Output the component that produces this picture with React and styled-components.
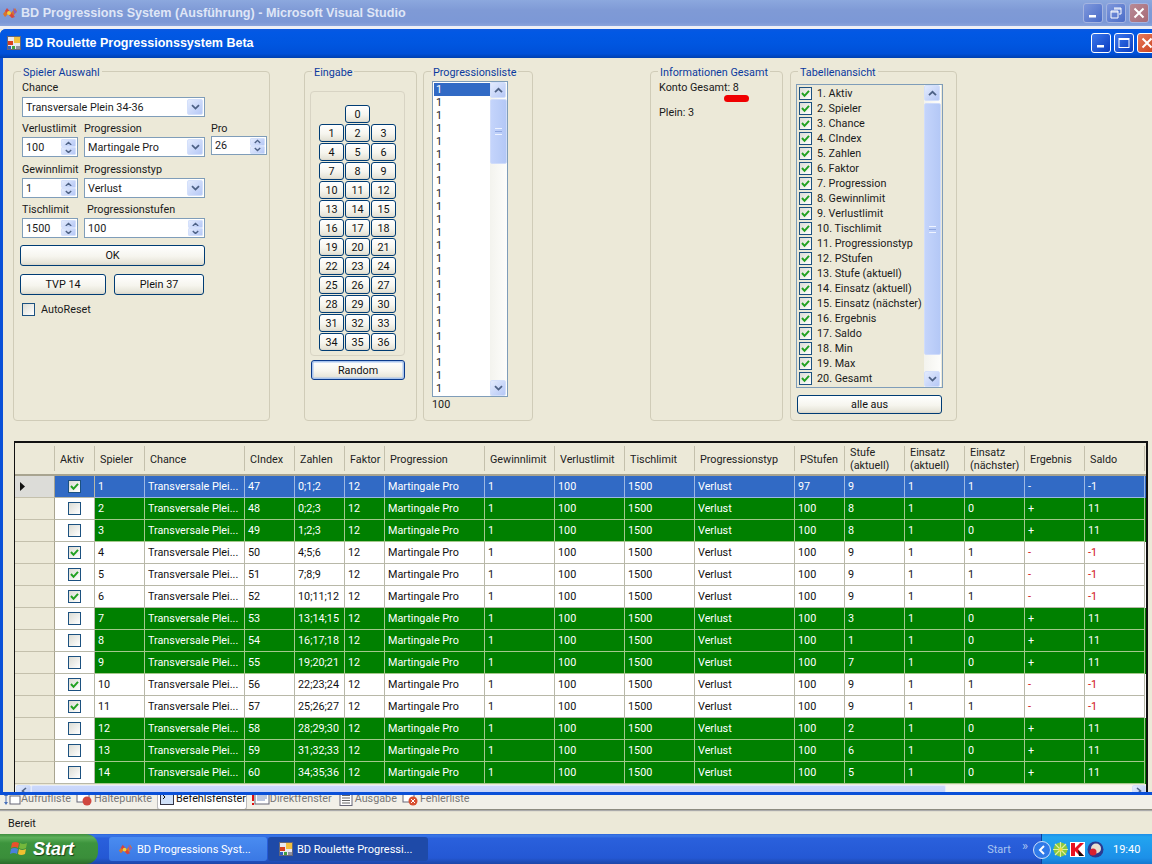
import React from "react";
import styled, { createGlobalStyle } from "styled-components";

const Global = createGlobalStyle`
  html, body { margin: 0; padding: 0; background: #ece9d8; }
  * { box-sizing: border-box; }
`;

const Screen = styled.div`
  width: 1152px; height: 864px; overflow: hidden; display: flex; flex-direction: column;
  font-family: Roboto, "Liberation Sans", Arial, sans-serif; font-size: 10.8px; color: #1a1a1a; background: #ece9d8;
`;
const BoldFont = `"Liberation Sans", Arial, sans-serif`;
const VsTitle = styled.div`
  height: 26px; flex: none; display: flex; align-items: center; padding: 0 3px 0 2px; gap: 3px;
  background: linear-gradient(180deg, #8ca8de 0%, #7f9ad6 40%, #7c98d6 85%, #8aa4dc 100%);
  color: #dfe6f6; font: bold 12.6px ${BoldFont};
`;
const Grow = styled.div`flex: 1;`;
const Strip = styled.div`height: 3px; flex: none; background: #eef0f6;`;
const CapBtn = styled.div`
  width: ${p => p.$w || 20}px; height: 20px; flex: none; border-radius: 3px; border: 1px solid ${p => p.$dim ? "#a4b4e0" : "#fff"};
  background: ${p => p.$red ? (p.$dim ? "linear-gradient(135deg,#b88a96,#a76a76)" : "linear-gradient(135deg,#e87a5c,#c8401c)") : (p.$dim ? "linear-gradient(135deg,#7f98dc,#4a6cc8)" : "linear-gradient(135deg,#3c78ec,#0a3cc0)")};
  display: flex; align-items: center; justify-content: center;
`;
const FormWindow = styled.div`
  height: 766px; flex: none; width: 1162px; display: flex; flex-direction: column; position: relative; z-index: 2;
  background: #0a50d8; padding: 0 3px 3px 3px; border-radius: 6px 6px 0 0;
`;
const FormTitle = styled.div`
  height: 29px; flex: none; display: flex; align-items: center; gap: 4px; padding: 0 5px 1px 7px; margin: 0 -3px;
  background: linear-gradient(180deg, #0a58e0 0%, #0258e4 12%, #0056e0 50%, #0050d8 85%, #0040b0 100%);
  border-radius: 6px 6px 0 0; color: #fff; font: bold 12.5px ${BoldFont};
`;
const FormBtns = styled.div`display: flex; gap: 3px;`;
const FormBody = styled.div`
  flex: 1; background: #ece9d8; display: flex; flex-direction: column; padding: 7px 0 0 10px; overflow: hidden; min-height: 0;
`;
const GroupRow = styled.div`display: flex; height: 376px; flex: none;`;
const Group = styled.fieldset`
  margin: 0 0 0 ${p => p.$ml || 0}px; padding: 0; width: ${p => p.$w}px; height: 356px; flex: none;
  border: 1px solid #d0ccb8; border-radius: 4px; display: block; min-width: 0; align-self: flex-start;
  background: transparent;
`;
const Legend = styled.legend`
  margin-left: 7px; padding: 0 2px; color: #0b3a9e; line-height: 15px; height: 13px;
`;
const SpielerBody = styled.div`
  display: grid; grid-template-columns: 56px 121px 56px; column-gap: 6px; padding: 2px 0 0 8px; width: 260px;
  grid-template-rows: 17px 20px 20px 20px 21px 20px 20px 20px;
`;
const Label = styled.div`
  line-height: 14px; white-space: nowrap; grid-column: ${p => p.$col || "auto"}; padding-left: ${p => p.$pl || 0}px;
  align-self: ${p => p.$end ? "end" : "start"}; padding-bottom: ${p => p.$end ? 1 : 0}px; padding-top: ${p => p.$end ? 0 : 1}px;
`;
const ComboBox = styled.div`
  height: 20px; border: 1px solid #7f9db9; background: #fff; display: flex; align-items: center; padding: 0 1px 0 ${p => p.$pl || 3}px;
  justify-content: space-between; grid-column: ${p => p.$col || "auto"}; white-space: nowrap; overflow: hidden;
`;
const ArrowBtn = styled.div`
  width: ${p => p.$w || 16}px; height: ${p => p.$h || 16}px; flex: none; background: linear-gradient(135deg, #e3ebfd, #b6c8f6);
  border: 1px solid #d4e0fb; border-radius: 2px; display: flex; align-items: center; justify-content: center;
`;
const Spin = styled.div`display: flex; flex-direction: column; flex: none; width: 15px;`;
const SpinBtn = styled.div`
  height: 8px; background: linear-gradient(135deg, #e3ebfd, #b6c8f6); border: 1px solid #d4e0fb; border-radius: 1px; display: flex; align-items: center; justify-content: center;
`;
const ProSpin = styled(ComboBox)`margin-top: -1px; height: 19px; align-self: start;`;
const XpButton = styled.button`
  font: inherit; color: #111; padding: 0; background: linear-gradient(180deg, #fff 0%, #f6f5ee 55%, #e6e4d8 90%, #d8d4c8 100%);
  border: 1px solid #003c74; border-radius: 3px; width: ${p => p.$w || 25}px; height: ${p => p.$h || 18}px; flex: none;
  ${p => p.$def ? "box-shadow: inset 0 0 0 1.5px #a8c4ee; border-color:#0a3a8c;" : ""}
`;
const BtnStack = styled.div`display: flex; flex-direction: column; padding: 7px 0 0 6px; width: 190px;`;
const BtnRow = styled.div`display: flex; gap: 8px; margin-top: 8px;`;
const CheckRow = styled.div`display: flex; align-items: center; gap: 6px; margin: 8px 0 0 2px;`;
const Check = styled.div`
  width: 13px; height: 13px; flex: none; border: 1px solid #1c5180; background: linear-gradient(135deg, #dcdcd4, #fff);
  display: flex; align-items: center; justify-content: center;
`;
const EingabeBody = styled.div`display: flex; flex-direction: column; padding: 13px 0 0 5px;`;
const Inner = styled.div`
  width: 95px; height: 265px; border: 1px solid #d8d4c4; border-radius: 4px; padding-top: 13px;
  display: grid; grid-template-columns: repeat(3, 25px); grid-auto-rows: 19px; column-gap: 1px; justify-content: center;
`;
const RandomWrap = styled.div`padding: 4px 0 0 1px;`;
const ListBody = styled.div`padding: 0 0 0 8px;`;
const ListBox = styled.div`
  width: 76px; height: 316px; border: 1px solid #7f9db9; background: #fff; display: flex; overflow: hidden; margin-top: 3px;
`;
const Items = styled.div`flex: 1; overflow: hidden; padding: 1px 0 0 1px;`;
const Item = styled.div`
  height: 13px; line-height: 13px; padding-left: 2px; ${p => p.$sel ? "background:#316ac5;color:#fff;" : ""}
`;
const VScroll = styled.div`
  width: 17px; flex: none; background: linear-gradient(90deg, #f3f3ee, #fdfdfb); display: flex; flex-direction: column;
`;
const Thumb = styled.div`
  height: ${p => p.$h}px; margin-top: ${p => p.$mt || 1}px; background: linear-gradient(90deg, #c4d4fb, #b4c8f6); border: 1px solid #d0dcfa; border-radius: 2px; flex: none;
  display: flex; align-items: center; justify-content: center; position: relative;
`;
const Grip = styled.div`
  position: absolute; top: ${p => p.$top}; width: 7px; height: 7px; border-top: 1px solid #eef3ff; border-bottom: 1px solid #eef3ff;
  background: linear-gradient(#8ea6e0, #8ea6e0) 0 2px / 7px 1px no-repeat;
`;
const Spacer = styled.div`flex: 1;`;
const Hundred = styled.div`margin-top: 1px; line-height: 13px;`;
const InfoBody = styled.div`padding: 3px 0 0 8px; line-height: 14px;`;
const Konto = styled.div`position: relative; width: fit-content; margin-bottom: 11px;`;
const RedMark = styled.div`
  position: absolute; left: 65px; top: 14px; width: 25px; height: 7px; background: #f00000; border-radius: 4px;
`;
const TabBody = styled.div`padding: 0 0 0 5px;`;
const CheckList = styled.div`
  width: 147px; height: 304px; border: 1px solid #7f9db9; background: #ece9d8; display: flex; overflow: hidden; margin-top: 6px; padding-right: 1px;
`;
const CheckItems = styled.div`flex: 1; padding: 1px 0 0 2px; overflow: hidden;`;
const CheckItem = styled.div`display: flex; align-items: center; gap: 5px; height: 15px; white-space: nowrap;`;
const AlleWrap = styled.div`padding: 7px 0 0 1px;`;

const DataGrid = styled.div`
  width: 1134px; flex: 1; min-height: 0; margin-left: 1px; border-top: 2px solid #111; border-left: 1px solid #111; border-right: 2px solid #111;
  background: #ece9d8; display: flex; flex-direction: column; overflow: hidden;
`;
const HeadRow = styled.div`
  display: flex; height: 33px; flex: none; border-bottom: 2px solid #a8a490; background: #ece9d8;
`;
const HeadCell = styled.div`
  width: ${p => p.$w}px; flex: none; border-right: 1px solid #c4c0ac; padding: 1px 0 0 5px; margin: 3px 0; display: flex; align-items: center;
  line-height: 13px; white-space: pre-line; color: #222;
`;
const Row = styled.div`
  display: flex; height: 22px; flex: none; background: ${p => p.$bg}; color: ${p => p.$fg};
`;
const RowHead = styled.div`
  width: 40px; flex: none; background: ${p => p.$sel ? "#dcdcd8" : "#ece9d8"}; border-right: 1px solid #a8a490; border-bottom: 1px solid #c4c0ac;
  display: flex; align-items: center; padding-left: 5px;
`;
const Cell = styled.div`
  width: ${p => p.$w}px; flex: none; border-right: 1px solid ${p => p.$line}; border-bottom: 1px solid ${p => p.$line};
  padding: 0 0 0 3px; line-height: 22px; white-space: nowrap; overflow: hidden;
  color: ${p => p.$c || "inherit"};
`;
const CheckCell = styled.div`
  width: 40px; flex: none; background: ${p => p.$sel ? "#316ac5" : "#fff"}; color: #111; border-right: 1px solid #b8b8a8; border-bottom: 1px solid #b8b8a8;
  display: flex; align-items: center; justify-content: center; padding-right: 1px;
`;
const HScroll = styled.div`
  height: 12px; flex: none; margin-top: 1px; background: #f6f5f0; display: flex; padding-left: 1px;
`;
const HButton = styled(ArrowBtn)`height: 12px;`;
const HThumb = styled.div`
  width: 915px; background: linear-gradient(180deg, #cbd8fb, #c2d1fa); border: 1px solid #e4ebfd; border-radius: 2px;
`;

const TabStrip = styled.div`
  height: 15px; flex: none; background: #f2f0e8; border-bottom: 1px solid #8e8c80; display: flex; gap: 5px; overflow: hidden; padding-left: 3px;
  box-shadow: 0 1px 1px #aaa; position: relative; z-index: 1;
`;
const Tab = styled.div`
  display: flex; align-items: flex-start; margin-top: -3px; color: ${p => p.$on ? "#111" : "#777"};
  ${p => p.$on ? "background:#fff; border-radius: 0 0 3px 3px; border: 1px solid #bbb; border-top:0;" : ""}
  line-height: 14px; height: 18px; white-space: nowrap;
`;
const Status = styled.div`
  flex: 1; background: #ece9d8; padding: 7px 0 0 8px; line-height: 14px;
`;
const Taskbar = styled.div`
  height: 30px; flex: none; display: flex; align-items: center; color: #fff;
  background: linear-gradient(180deg, #2a62d8 0%, #3a78e8 6%, #2a60dc 14%, #2458d4 80%, #1c46a8 100%);
`;
const StartBtn = styled.div`
  width: 98px; height: 30px; flex: none; display: flex; align-items: center; gap: 4px; padding-left: 10px; border-radius: 0 12px 12px 0;
  background: linear-gradient(180deg, #3f8f3f 0%, #5eb05a 12%, #3d943d 30%, #3a8e3a 80%, #2a6a2a 100%);
  font: italic bold 18px ${BoldFont}; text-shadow: 1px 1px 1px #1a3f1a;
`;
const TaskBtn = styled.div`
  width: ${p => p.$w}px; height: 24px; flex: none; margin-left: ${p => p.$ml}px; border-radius: 3px; display: flex; align-items: center; gap: 4px;
  padding-left: ${p => p.$pl}px; white-space: nowrap; font-size: 11px;
  background: ${p => p.$on ? "#1e4aa8" : "linear-gradient(180deg,#4a8cf0,#3a78e4)"};
`;
const TrayHint = styled.div`color: #a8c4f0; font-size: 11px; margin-right: 11px;`;
const Chev = styled.div`color: #a8c4f0; font-size: 13px; margin: -8px 13px 0 0;`;
const Tray = styled.div`
  width: 111px; height: 30px; flex: none; display: flex; align-items: center; gap: 2px; position: relative; padding-left: 11px;
  background: linear-gradient(180deg, #1c8ee8 0%, #22a4f0 10%, #1c90e8 80%, #1478d0 100%); border-left: 1px solid #0d3f9c;
`;
const Round = styled.div`
  position: absolute; left: -9px; top: 7px; width: 18px; height: 18px; border-radius: 50%; background: #2f7ae8; border: 1px solid #cfe0fa;
  display: flex; align-items: center; justify-content: center;
`;
const Clock = styled.div`margin-left: 7px; font-size: 11px;`;

const Up = ({ s = 9, c = "#4d6185" }) => <svg width={s} height={s * 0.7} viewBox="0 0 9 6"><path d="M1 5 L4.5 1.6 L8 5" fill="none" stroke={c} strokeWidth="1.8" /></svg>;
const Down = ({ s = 9, c = "#4d6185" }) => <svg width={s} height={s * 0.7} viewBox="0 0 9 6"><path d="M1 1 L4.5 4.4 L8 1" fill="none" stroke={c} strokeWidth="1.8" /></svg>;
const SpinCtl = () => <Spin><SpinBtn><Up s={7} /></SpinBtn><SpinBtn><Down s={7} /></SpinBtn></Spin>;
const Tick = () => <svg width="9" height="9" viewBox="0 0 9 9"><path d="M1 4 L3.5 6.8 L8 1.8" fill="none" stroke="#21a121" strokeWidth="2" /></svg>;

const FormIcon = ({ s = 14 }) => (
  <svg width={s} height={s} viewBox="0 0 14 14"><rect width="14" height="14" fill="#e8e8f0" /><rect x="0.5" y="0.5" width="13" height="13" fill="none" stroke="#667" /><rect x="7" y="1" width="6" height="6" fill="#f0c040" /><rect x="1" y="5" width="5" height="4" fill="#d84020" /><rect x="1" y="10" width="3" height="3" fill="#3060c0" /><rect x="5" y="10" width="3" height="3" fill="#40a040" /><rect x="9" y="10" width="4" height="3" fill="#9090a0" /></svg>
);
const VsIcon = ({ s = 16 }) => (
  <svg width={s} height={s} viewBox="0 0 16 16"><path d="M1 9 L5 4 L9 8 L13 3 L15 6 L10 13 L6 9 L3 12 Z" fill="#d9742c" /><path d="M5 3 L13 12 L10 13 L3 6 Z" fill="#d83c3c" opacity=".85" /><circle cx="7" cy="8" r="2" fill="#f0d040" /><path d="M11 3 L15 7 L12 9 Z" fill="#8a5cc0" /></svg>
);
const WinLogo = () => (
  <svg width="19" height="18" viewBox="0 0 19 18"><path d="M2 3 Q5 1 9 3 L8 8 Q5 6 1 8 Z" fill="#e8502c" /><path d="M10 3 Q13 5 17 3 L16 8 Q12 10 9 8 Z" fill="#74b83c" /><path d="M1 9 Q4 7 8 9 L7 14 Q4 12 0 14 Z" fill="#4a80dc" /><path d="M9 9 Q12 11 16 9 L15 14 Q11 16 8 14 Z" fill="#f0c030" /></svg>
);
const Glyph = ({ k }) => {
  if (k === 0) return <svg width="18" height="14" viewBox="0 0 18 14"><path d="M3 1 L1 4 L5 4 Z M3 13 L1 10 L5 10 Z" fill="#4a70b8" /><path d="M3 4 V10" stroke="#4a70b8" /><rect x="7" y="4" width="10" height="8" fill="#fff" stroke="#667" /></svg>;
  if (k === 1) return <svg width="18" height="14" viewBox="0 0 18 14"><rect x="1" y="0" width="12" height="10" fill="#fff" stroke="#667" /><circle cx="11" cy="9" r="4.5" fill="#d04840" /></svg>;
  if (k === 2) return <svg width="18" height="14" viewBox="0 0 18 14"><rect x="2.5" y="0.5" width="13" height="12" fill="#cfe0f8" stroke="#334" /><path d="M5 3 L7 5 L5 7" fill="none" stroke="#111" /></svg>;
  if (k === 3) return <svg width="18" height="14" viewBox="0 0 18 14"><rect x="3" y="1" width="14" height="11" fill="#fff" stroke="#667" /><path d="M5 4 H15 M5 6 H15 M5 8 H13" stroke="#7a90c0" /><path d="M1 2 V9 M1 11 V13" stroke="#e01010" strokeWidth="2" /></svg>;
  if (k === 4) return <svg width="18" height="14" viewBox="0 0 18 14"><rect x="3" y="0.5" width="12" height="13" fill="#fff" stroke="#667" /><path d="M5 3.5 H13 M5 6 H13 M5 8.5 H13 M5 11 H13" stroke="#666" /></svg>;
  return <svg width="18" height="14" viewBox="0 0 18 14"><rect x="1" y="0" width="11" height="10" fill="#fff" stroke="#667" /><circle cx="11" cy="9" r="4.5" fill="#d85030" /><path d="M9 7 L13 11 M13 7 L9 11" stroke="#fff" /></svg>;
};

const Flower = () => <svg width="15" height="15" viewBox="0 0 15 15"><circle cx="7.5" cy="7.5" r="7" fill="#8cc83c" /><path d="M7.5 0 V15 M0 7.5 H15 M2 2 L13 13 M13 2 L2 13" stroke="#dff0a0" strokeWidth="1.2" /><circle cx="7.5" cy="7.5" r="2" fill="#f0e040" /></svg>;
const KIcon = () => <svg width="15" height="15" viewBox="0 0 15 15"><rect width="15" height="15" fill="#fff" /><path d="M1 1 H5 V6 L10 1 H14 L8 7 L14 14 H10 L5 9 V14 H1 Z" fill="#e81020" /><path d="M8 8 L14 14 H9 Z" fill="#111" /></svg>;
const CircleIcon = () => <svg width="17" height="17" viewBox="0 0 17 17"><circle cx="8.5" cy="8.5" r="8" fill="#2a3a90" /><circle cx="9" cy="7.5" r="5" fill="#e8e0d0" /><circle cx="6" cy="11" r="3.5" fill="#d82030" /></svg>;

const cols = [
  ["Spieler", 50], ["Chance", 100], ["CIndex", 50], ["Zahlen", 50], ["Faktor", 40], ["Progression", 100],
  ["Gewinnlimit", 70], ["Verlustlimit", 70], ["Tischlimit", 70], ["Progressionstyp", 100], ["PStufen", 50],
  ["Stufe\n(aktuell)", 60], ["Einsatz\n(aktuell)", 60], ["Einsatz\n(nächster)", 60], ["Ergebnis", 60], ["Saldo", 60],
];
const rowsData = [
  [1, 47, "0;1;2", 97, 9, 1, 1],
  [2, 48, "0;2;3", 100, 8, 0, 0],
  [3, 49, "1;2;3", 100, 8, 0, 0],
  [4, 50, "4;5;6", 100, 9, 1, 1],
  [5, 51, "7;8;9", 100, 9, 1, 1],
  [6, 52, "10;11;12", 100, 9, 1, 1],
  [7, 53, "13;14;15", 100, 3, 0, 0],
  [8, 54, "16;17;18", 100, 1, 0, 0],
  [9, 55, "19;20;21", 100, 7, 0, 0],
  [10, 56, "22;23;24", 100, 9, 1, 1],
  [11, 57, "25;26;27", 100, 9, 1, 1],
  [12, 58, "28;29;30", 100, 2, 0, 0],
  [13, 59, "31;32;33", 100, 6, 0, 0],
  [14, 60, "34;35;36", 100, 5, 0, 0],
];
const checkNames = ["1. Aktiv", "2. Spieler", "3. Chance", "4. CIndex", "5. Zahlen", "6. Faktor", "7. Progression", "8. Gewinnlimit", "9. Verlustlimit", "10. Tischlimit", "11. Progressionstyp", "12. PStufen", "13. Stufe (aktuell)", "14. Einsatz (aktuell)", "15. Einsatz (nächster)", "16. Ergebnis", "17. Saldo", "18. Min", "19. Max", "20. Gesamt"];
const tabs = ["Aufrufliste", "Haltepunkte", "Befehlsfenster", "Direktfenster", "Ausgabe", "Fehlerliste"];

function GridRow({ d, i }) {
  const [sp, ci, za, ps, st, ei, checked] = d;
  const sel = i === 0;
  const win = ei === 0;
  const bg = sel ? "#316ac5" : win ? "#008000" : "#fff";
  const fg = sel || win ? "#fff" : "#111";
  const line = sel ? "#9db8e4" : win ? "#a4c88c" : "#b8b8a8";
  const vals = [sp, "Transversale Plei...", ci, za, 12, "Martingale Pro", 1, 100, 1500, "Verlust", ps, st, 1, ei, win ? "+" : "-", win ? 11 : -1];
  return (
    <Row $bg={bg} $fg={fg}>
      <RowHead $sel={sel}>{sel && <svg width="6" height="9" viewBox="0 0 6 9"><path d="M0 0 L5 4.5 L0 9 Z" fill="#111" /></svg>}</RowHead>
      <CheckCell $sel={sel}><Check>{checked ? <Tick /> : null}</Check></CheckCell>
      {vals.map((v, j) => (
        <Cell key={j} $w={cols[j][1]} $line={line} $c={!sel && !win && j >= 14 ? "#d01010" : undefined}>{v}</Cell>
      ))}
    </Row>
  );
}

export default function App() {
  const nums = Array.from({ length: 36 }, (_, i) => i + 1);
  return (
    <Screen>
      <Global />
      <VsTitle>
        <VsIcon />
        <span>BD Progressions System (Ausführung) - Microsoft Visual Studio</span>
        <Grow />
        <CapBtn $dim><svg width="10" height="10" viewBox="0 0 10 10"><rect x="1" y="7" width="7" height="2.5" fill="#fff" /></svg></CapBtn>
        <CapBtn $dim><svg width="12" height="12" viewBox="0 0 12 12"><path d="M4 1 H11 V7 H9 M1 4 H8 V11 H1 Z M4 2 H11 M1 5 H8" fill="none" stroke="#fff" /></svg></CapBtn>
        <CapBtn $dim $red><svg width="12" height="12" viewBox="0 0 12 12"><path d="M1.5 1.5 L10.5 10.5 M10.5 1.5 L1.5 10.5" stroke="#fff" strokeWidth="2" /></svg></CapBtn>
      </VsTitle>
      <Strip />
      <FormWindow>
        <FormTitle>
          <FormIcon />
          <span>BD Roulette Progressionssystem Beta</span>
          <Grow />
          <FormBtns>
            <CapBtn><svg width="10" height="10" viewBox="0 0 10 10"><rect x="1" y="7" width="7" height="2.5" fill="#fff" /></svg></CapBtn>
            <CapBtn><svg width="12" height="12" viewBox="0 0 12 12"><rect x="1" y="1.5" width="10" height="9" fill="none" stroke="#fff" /><rect x="1" y="1" width="10" height="2" fill="#fff" /></svg></CapBtn>
            <CapBtn $red><svg width="12" height="12" viewBox="0 0 12 12"><path d="M1.5 1.5 L10.5 10.5 M10.5 1.5 L1.5 10.5" stroke="#fff" strokeWidth="2" /></svg></CapBtn>
          </FormBtns>
        </FormTitle>
        <FormBody>
          <GroupRow>
            <Group $w={257}>
              <Legend>Spieler Auswahl</Legend>
              <SpielerBody>
                <Label $col="1 / 4">Chance</Label>
                <ComboBox $col="1 / 3">Transversale Plein 34-36<ArrowBtn><Down /></ArrowBtn></ComboBox>
                <div />
                <Label $end>Verlustlimit</Label><Label $end>Progression</Label><Label $end>Pro</Label>
                <ComboBox>100<SpinCtl /></ComboBox>
                <ComboBox>Martingale Pro<ArrowBtn><Down /></ArrowBtn></ComboBox>
                <ProSpin>26<SpinCtl /></ProSpin>
                <Label $end>Gewinnlimit</Label><Label $end>Progressionstyp</Label><div />
                <ComboBox>1<SpinCtl /></ComboBox>
                <ComboBox>Verlust<ArrowBtn><Down /></ArrowBtn></ComboBox>
                <div />
                <Label $end>Tischlimit</Label><Label $end $pl={3}>Progressionstufen</Label><div />
                <ComboBox>1500<SpinCtl /></ComboBox>
                <ComboBox>100<SpinCtl /></ComboBox>
              </SpielerBody>
              <BtnStack>
                <XpButton $w={185} $h={21}>OK</XpButton>
                <BtnRow>
                  <XpButton $w={86} $h={21}>TVP 14</XpButton>
                  <XpButton $w={90} $h={21}>Plein 37</XpButton>
                </BtnRow>
                <CheckRow><Check />AutoReset</CheckRow>
              </BtnStack>
            </Group>
            <Group $w={113} $ml={34}>
              <Legend>Eingabe</Legend>
              <EingabeBody>
                <Inner>
                  <div />
                  <XpButton>0</XpButton>
                  <div />
                  {nums.map(n => <XpButton key={n}>{n}</XpButton>)}
                </Inner>
                <RandomWrap><XpButton $w={94} $h={20} $def>Random</XpButton></RandomWrap>
              </EingabeBody>
            </Group>
            <Group $w={110} $ml={6}>
              <Legend>Progressionsliste</Legend>
              <ListBody>
                <ListBox>
                  <Items>{Array.from({ length: 24 }, (_, i) => <Item key={i} $sel={i === 0}>1</Item>)}</Items>
                  <VScroll>
                    <ArrowBtn $w={16}><Up /></ArrowBtn>
                    <Thumb $h={65}><Grip $top="28px" /></Thumb>
                    <Spacer />
                    <ArrowBtn $w={16}><Down /></ArrowBtn>
                  </VScroll>
                </ListBox>
                <Hundred>100</Hundred>
              </ListBody>
            </Group>
            <Group $w={133} $ml={117}>
              <Legend>Informationen Gesamt</Legend>
              <InfoBody>
                <Konto>Konto Gesamt: 8<RedMark /></Konto>
                <div>Plein: 3</div>
              </InfoBody>
            </Group>
            <Group $w={167} $ml={7}>
              <Legend>Tabellenansicht</Legend>
              <TabBody>
                <CheckList>
                  <CheckItems>
                    {checkNames.map(n => <CheckItem key={n}><Check><Tick /></Check>{n}</CheckItem>)}
                  </CheckItems>
                  <VScroll>
                    <ArrowBtn $w={16}><Up /></ArrowBtn>
                    <Thumb $h={252} $mt={2}><Grip $top="122px" /></Thumb>
                    <Spacer />
                    <ArrowBtn $w={16}><Down /></ArrowBtn>
                  </VScroll>
                </CheckList>
                <AlleWrap><XpButton $w={145} $h={19}>alle aus</XpButton></AlleWrap>
              </TabBody>
            </Group>
          </GroupRow>
          <DataGrid>
            <HeadRow>
              <HeadCell $w={40} />
              <HeadCell $w={40}>Aktiv</HeadCell>
              {cols.map(([n, w]) => <HeadCell key={n} $w={w}>{n}</HeadCell>)}
            </HeadRow>
            {rowsData.map((d, i) => <GridRow key={i} d={d} i={i} />)}
            <HScroll>
              <HButton $w={15}><svg width="6" height="8" viewBox="0 0 6 8"><path d="M5 1 L1.5 4 L5 7" fill="none" stroke="#4d6185" strokeWidth="1.6" /></svg></HButton>
              <HThumb />
              <Spacer />
              <HButton $w={14}><svg width="6" height="8" viewBox="0 0 6 8"><path d="M1 1 L4.5 4 L1 7" fill="none" stroke="#4d6185" strokeWidth="1.6" /></svg></HButton>
            </HScroll>
          </DataGrid>
        </FormBody>
      </FormWindow>
      <TabStrip>
        {tabs.map((t, i) => <Tab key={t} $on={i === 2}><Glyph k={i} />{t}</Tab>)}
      </TabStrip>
      <Status>Bereit</Status>
      <Taskbar>
        <StartBtn><WinLogo />Start</StartBtn>
        <TaskBtn $w={158} $ml={11} $pl={9}><VsIcon s={15} />BD Progressions Syst...</TaskBtn>
        <TaskBtn $w={160} $ml={1} $pl={11} $on><FormIcon />BD Roulette Progressi...</TaskBtn>
        <Grow />
        <TrayHint>Start</TrayHint>
        <Chev>»</Chev>
        <Tray>
          <Round><svg width="8" height="10" viewBox="0 0 8 10"><path d="M6 1 L2 5 L6 9" fill="none" stroke="#fff" strokeWidth="2" /></svg></Round>
          <Flower /><KIcon /><CircleIcon />
          <Clock>19:40</Clock>
        </Tray>
      </Taskbar>
    </Screen>
  );
}
